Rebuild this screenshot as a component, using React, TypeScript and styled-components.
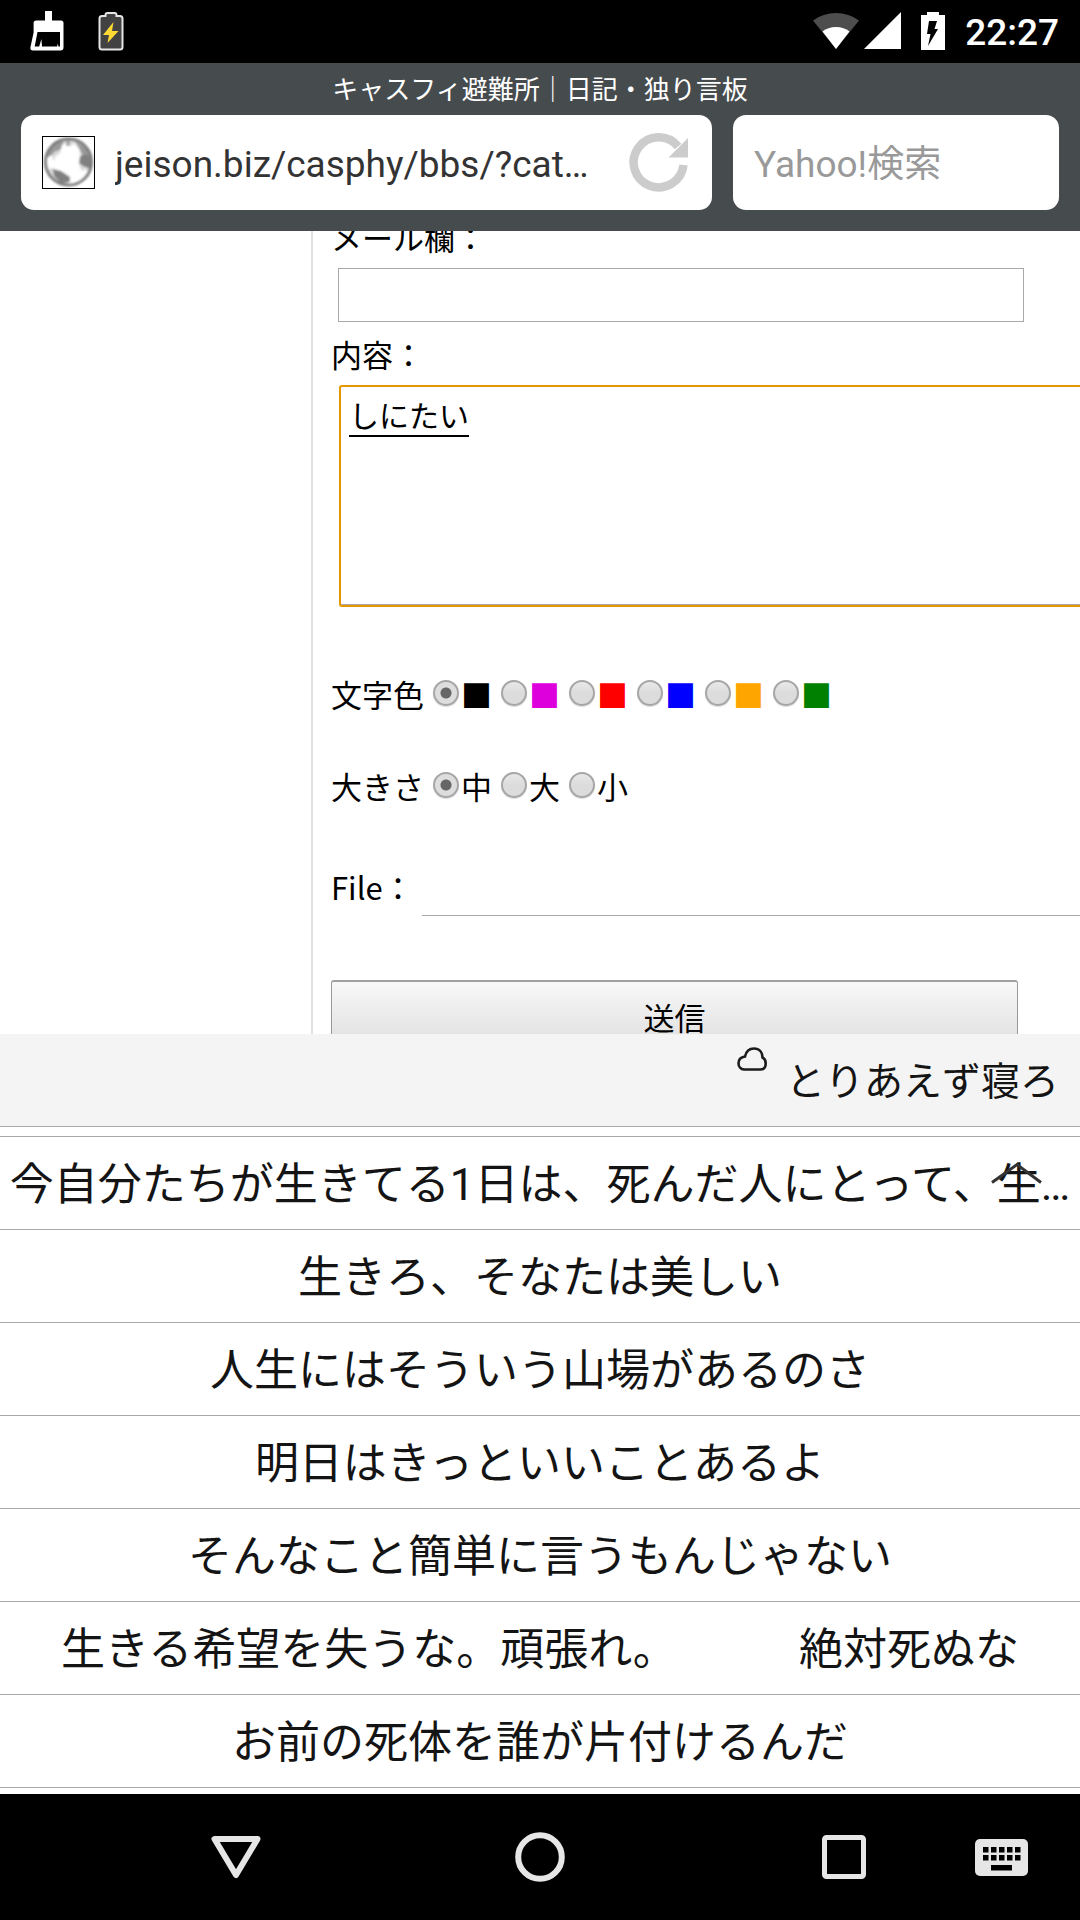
import React from 'react';
import styled, { createGlobalStyle } from 'styled-components';

const UI_FONT = "Roboto, 'Noto Sans CJK JP', sans-serif";
const PAGE_FONT = "'Noto Sans CJK JP', sans-serif";

const GlobalStyle = createGlobalStyle`
  *, *::before, *::after { box-sizing: border-box; }
  body { margin: 0; background: #000; }
  button, input, textarea { margin: 0; font: inherit; }
`;

const Screen = styled.div`
  display: flex;
  flex-direction: column;
  height: 100vh;
  overflow: hidden;
  background: #fff;
  font-family: ${UI_FONT};
`;

const StatusBar = styled.div`
  flex: none;
  display: flex;
  align-items: center;
  justify-content: space-between;
  height: 63px;
  padding: 0 21px 2px 30px;
  background: #000;
  color: #fff;
`;

const IconGroup = styled.div<{ $gap: number }>`
  display: flex;
  align-items: center;
  gap: ${(p) => p.$gap}px;
`;

const Glyph = styled.svg`
  display: block;
  flex: none;
`;

const Clock = styled.time`
  padding-top: 4px;
  font-size: 37px;
  font-weight: 500;
  line-height: 56px;
`;

const Header = styled.header`
  flex: none;
  padding: 0 21px 21px;
  background: #464b4e;
`;

const Title = styled.h1`
  margin: 0;
  padding-top: 2px;
  font-size: 26px;
  font-weight: 400;
  line-height: 50px;
  text-align: center;
  color: #fff;
`;

const Bars = styled.div`
  display: grid;
  grid-template-columns: 691fr 326fr;
  gap: 21px;
`;

const Bar = styled.div`
  display: flex;
  align-items: center;
  gap: 20px;
  min-width: 0;
  height: 95px;
  padding: 0 23px 0 21px;
  border-radius: 13px;
  background: #fff;
`;

const BarInput = styled.input`
  flex: 1;
  min-width: 0;
  width: 100%;
  height: 60px;
  padding: 3px 0 0;
  border: 0;
  outline: 0;
  background: none;
  color: #333;
  font-size: 37px;
  line-height: 57px;
  text-overflow: ellipsis;
  &::placeholder { color: #999; opacity: 1; }
`;

const PlainButton = styled.button`
  display: flex;
  align-items: center;
  justify-content: center;
  padding: 0;
  border: 0;
  background: none;
  color: inherit;
`;

const WebPage = styled.main`
  flex: 1;
  min-height: 0;
  display: grid;
  grid-template-columns: 311px minmax(0, 1fr);
  overflow: hidden;
  background: #fff;
  color: #000;
  font-family: ${PAGE_FONT};
  font-size: 31px;
  line-height: 46px;
`;

const Form = styled.form`
  grid-column: 2;
  margin-top: -17px;
  padding-left: 18px;
  border-left: 2px solid #e0e0e0;
`;

const Field = styled.div<{ $after: number }>`
  display: flex;
  flex-direction: column;
  gap: 8px;
  margin-bottom: ${(p) => p.$after}px;
`;

const MailInput = styled.input`
  width: calc(100% - 63px);
  height: 54px;
  margin-left: 7px;
  padding: 0 8px;
  border: 1px solid #a9a9a9;
  outline: 0;
`;

const Body = styled.textarea`
  display: block;
  width: 100%;
  height: 222px;
  margin-left: 8px;
  padding: 6px 8px;
  border: 2px solid #e59700;
  border-radius: 3px;
  outline: 0;
  box-shadow: inset 0 -1px 0 #a9a9a9;
  resize: none;
  font-size: 30px;
  line-height: 42px;
  text-decoration: underline;
  text-decoration-thickness: 2px;
  text-underline-offset: 8px;
`;

const Choices = styled.div`
  display: flex;
  align-items: center;
  gap: 9px;
  margin-bottom: 46px;
`;

const Choice = styled.label<{ $ink?: string }>`
  display: flex;
  align-items: center;
  gap: 2px;
  color: ${(p) => p.$ink ?? '#000'};
`;

const Radio = styled.input`
  appearance: none;
  width: 26px;
  height: 26px;
  margin: 0 0 3px;
  border: 2px solid #a6a6a6;
  border-radius: 50%;
  background: linear-gradient(#e8e8e8, #dcdcdc 50%);
  box-shadow: 0 1px 1px #ddd;
  &:checked {
    background: radial-gradient(circle, #666 0 5px, #ddd 6px);
  }
`;

const FileRow = styled.div`
  display: flex;
  align-items: flex-start;
  gap: 8px;
  margin: 55px 0 64px;
`;

const FileInput = styled.input`
  flex: 1;
  min-width: 0;
  height: 52px;
  border-bottom: 1px solid #a9a9a9;
  font-size: 0;
  &::file-selector-button { display: none; }
`;

const Submit = styled.button`
  width: calc(100% - 62px);
  height: 73px;
  padding: 0;
  border: 1px solid #999;
  border-top: 2px solid #a0a0a0;
  border-radius: 3px;
  background: linear-gradient(#f8f8f8, #dddddd);
  color: #000;
`;

const Candidates = styled.section`
  flex: none;
  background: #fff;
  color: #141414;
`;

const Predicted = styled.div`
  display: flex;
  justify-content: flex-end;
  align-items: flex-start;
  gap: 19px;
  height: 93px;
  padding: 0 21px;
  border-bottom: 1px solid #aaa;
  background: #f4f4f4;
`;

const PredictedWord = styled(PlainButton)`
  padding-top: 4px;
  font-size: 39px;
  line-height: 88px;
`;

const CloudBox = styled.span`
  padding-top: 12px;
`;

const Rows = styled.div`
  position: relative;
  margin: 9px 0 6px;
  border-top: 1px solid #aaa;
`;

const Row = styled.div`
  display: flex;
  border-bottom: 1px solid #aaa;
`;

const Word = styled(PlainButton)`
  flex: 1 0 auto;
  height: 92px;
  padding-top: 4px;
  font-size: 44px;
  line-height: 88px;
  white-space: nowrap;
`;

const Collapse = styled(PlainButton)`
  position: absolute;
  top: 24px;
  right: 36px;
`;

const NavBar = styled.nav`
  flex: none;
  display: grid;
  grid-template-columns: 157fr 158fr 146fr 158fr 146fr 158fr 157fr;
  height: 126px;
  background: #000;
`;

const NavButton = styled(PlainButton)<{ $col: number }>`
  grid-column: ${(p) => p.$col};
`;

const INKS = [
  { name: '黒', ink: '#000000' },
  { name: '紫', ink: '#dd00dd' },
  { name: '赤', ink: '#ff0000' },
  { name: '青', ink: '#0000ff' },
  { name: '橙', ink: '#ffa500' },
  { name: '緑', ink: '#008000' },
];

const SIZES = ['中', '大', '小'];

const CANDIDATES = [
  ['今自分たちが生きてる1日は、死んだ人にとって、生…'],
  ['生きろ、そなたは美しい'],
  ['人生にはそういう山場があるのさ'],
  ['明日はきっといいことあるよ'],
  ['そんなこと簡単に言うもんじゃない'],
  ['生きる希望を失うな。頑張れ。', '絶対死ぬな'],
  ['お前の死体を誰が片付けるんだ'],
];

const BrushIcon = () => (
  <Glyph width="34" height="40" viewBox="0 0 34 40">
    <path fill="#fff" d="M15 0h7v9.500h9q2.500 0 2.500 2.500V36.500q0 3-3 3H3Q0 39.500 .4 36.500L3.600 21.500V12q0-2.500 2.500-2.500H15z" />
    <path d="M7.500 21H30V35.500h-1.500l-.8-3-.5 3H12l-.6-7.500-2.200 7.500H4.700z" />
  </Glyph>
);

const ChargingIcon = () => (
  <Glyph width="26" height="40" viewBox="0 0 26 40">
    <path fill="#424242" stroke="#e6e6e6" strokeWidth="2" d="M4 5h3.500V4q0-2 2-2h7q2 0 2 2v1H22q2.500 0 2.500 2.500V36q0 2.500-2.500 2.500H4Q1.500 38.500 1.500 36V7.500Q1.500 5 4 5z" />
    <path fill="#fdd835" d="M15.500 11 5 24h6l-1.500 8L20.500 20H14z" />
  </Glyph>
);

const WifiIcon = () => (
  <Glyph width="46" height="38" viewBox="0 0 46 38">
    <path fill="#4d4d4d" d="M23 37 0 8.500Q10 1 23 1t23 7.500z" />
    <path fill="#fff" d="M23 37 9.500 19.500Q15 15 23 15t13.500 4.500z" />
  </Glyph>
);

const SignalIcon = () => (
  <Glyph width="37" height="38" viewBox="0 0 37 38">
    <path fill="#fff" d="M37 0v37H0z" />
  </Glyph>
);

const BatteryIcon = () => (
  <Glyph width="24" height="38" viewBox="0 0 24 38">
    <path fill="#fff" d="M6 0h12v3h6v35H0V3h6z" />
    <path d="M8 9h8l-2.500 8H17L7 34l2.500-12H6z" />
  </Glyph>
);

const GlobeIcon = () => (
  <Glyph width="53" height="53" viewBox="0 0 53 53">
    <defs>
      <filter id="soft" x="-20%" y="-20%" width="140%" height="140%">
        <feGaussianBlur stdDeviation="1.100" />
      </filter>
      <clipPath id="disc"><circle cx="26.500" cy="26" r="23" /></clipPath>
    </defs>
    <rect x=".5" y=".5" width="52" height="52" fill="#fff" stroke="#000" />
    <g filter="url(#soft)">
      <circle cx="26.500" cy="26" r="23" fill="#d9d9d9" />
      <g clipPath="url(#disc)">
        <path fill="#999" d="M4 16 14 5l8 1-2 7-8 3-5 8zM33 5l12 8 4 12-8-5-4-8z" />
        <path fill="#fff" d="M20 9l3-2 2 3h4l3-3 5 6 2 9-2 7 4 9-8 10-6 1-8-12-8-7 2-9 5-4z" />
        <path fill="#fff" d="M5 22l5-3 1 5 4 3-1 3 6 8-9-6-5 1zM37 38l6-5 3 3-9 11-7 1z" />
        <path fill="#808080" d="M11 33l8 2 9 6v5l-9 1-7-7zM38 20l7-2 5 6-1 9-8-3-4-3z" />
        <path fill="#aaa" d="M24 4h4v6h-4z" />
      </g>
      <circle cx="26.500" cy="26" r="23" fill="none" stroke="#7c7c7c" strokeWidth="3" />
    </g>
  </Glyph>
);

const ReloadIcon = () => (
  <Glyph width="60" height="60" viewBox="0 0 60 60">
    <path fill="none" stroke="#ccc" strokeWidth="8.500" d="M54.500 32A25 25 0 1 1 49 13.500" />
    <path fill="#ccc" d="M59 5V24.500H39.500z" />
  </Glyph>
);

const CloudIcon = () => (
  <Glyph width="30" height="26" viewBox="0 0 30 26">
    <path fill="none" stroke="#1c1c1c" strokeWidth="2.600" d="M7 23.500a6 6 0 0 1-5.500-6c0-4 2.800-6.500 6.500-7 1-4.500 4-8 9-8 5.500 0 8.500 4 8.500 9 2 1 3.200 3 3.200 6 0 4-2 6-5.200 6z" />
  </Glyph>
);

export default function App() {
  return (
    <Screen>
      <GlobalStyle />
      <StatusBar>
        <IconGroup $gap={34}>
          <BrushIcon />
          <ChargingIcon />
        </IconGroup>
        <IconGroup $gap={20}>
          <IconGroup $gap={5}>
            <WifiIcon />
            <SignalIcon />
          </IconGroup>
          <BatteryIcon />
          <Clock>22:27</Clock>
        </IconGroup>
      </StatusBar>

      <Header>
        <Title>キャスフィ避難所｜日記・独り言板</Title>
        <Bars>
          <Bar>
            <GlobeIcon />
            <BarInput aria-label="URL" readOnly value="jeison.biz/casphy/bbs/?cat…" />
            <PlainButton type="button" aria-label="再読み込み">
              <ReloadIcon />
            </PlainButton>
          </Bar>
          <Bar>
            <BarInput type="search" aria-label="検索" placeholder="Yahoo!検索" />
          </Bar>
        </Bars>
      </Header>

      <WebPage>
        <Form onSubmit={(e) => e.preventDefault()}>
          <Field $after={9}>
            <label htmlFor="mail">メール欄：</label>
            <MailInput id="mail" />
          </Field>
          <Field $after={64}>
            <label htmlFor="body">内容：</label>
            <Body id="body" defaultValue="しにたい" spellCheck={false} />
          </Field>
          <Choices role="radiogroup" aria-label="文字色">
            <span>文字色</span>
            {INKS.map((c, i) => (
              <Choice key={c.ink} $ink={c.ink}>
                <Radio type="radio" name="ink" aria-label={c.name} defaultChecked={i === 0} />
                ■
              </Choice>
            ))}
          </Choices>
          <Choices role="radiogroup" aria-label="大きさ">
            <span>大きさ</span>
            {SIZES.map((s, i) => (
              <Choice key={s}>
                <Radio type="radio" name="size" defaultChecked={i === 0} />
                {s}
              </Choice>
            ))}
          </Choices>
          <FileRow>
            <label htmlFor="file">File：</label>
            <FileInput id="file" type="file" />
          </FileRow>
          <Submit type="submit">送信</Submit>
        </Form>
      </WebPage>

      <Candidates>
        <Predicted>
          <CloudBox>
            <CloudIcon />
          </CloudBox>
          <PredictedWord type="button">とりあえず寝ろ</PredictedWord>
        </Predicted>
        <Rows>
          {CANDIDATES.map((words) => (
            <Row key={words[0]}>
              {words.map((w) => (
                <Word type="button" key={w}>{w}</Word>
              ))}
            </Row>
          ))}
          <Collapse type="button" aria-label="閉じる">
            <Glyph width="54" height="24" viewBox="0 0 54 24">
              <path fill="none" stroke="#333" strokeWidth="3" d="M2 21.500 27 3.500l24 18" />
            </Glyph>
          </Collapse>
        </Rows>
      </Candidates>

      <NavBar>
        <NavButton type="button" $col={2} aria-label="戻る">
          <Glyph width="50" height="44" viewBox="0 0 50 44">
            <path fill="none" stroke="#e6e6e6" strokeWidth="6" strokeLinejoin="round" d="M3.500 4h43L25 40z" />
          </Glyph>
        </NavButton>
        <NavButton type="button" $col={4} aria-label="ホーム">
          <Glyph width="50" height="50" viewBox="0 0 50 50">
            <circle cx="25" cy="25" r="21.800" fill="none" stroke="#e6e6e6" strokeWidth="6" />
          </Glyph>
        </NavButton>
        <NavButton type="button" $col={6} aria-label="履歴">
          <Glyph width="44" height="44" viewBox="0 0 44 44">
            <rect x="2.500" y="2.500" width="39" height="39" rx="2" fill="none" stroke="#e6e6e6" strokeWidth="5" />
          </Glyph>
        </NavButton>
        <NavButton type="button" $col={7} aria-label="キーボード">
          <Glyph width="53" height="37" viewBox="0 0 53 37">
            <rect width="53" height="37" rx="5" fill="#e6e6e6" />
            {[8, 16, 24, 32, 40].map((x) => (
              <path key={x} d={`M${x} 8h5.500v5.500h-5.500zM${x} 16h5.500v5.500h-5.500z`} />
            ))}
            <path d="M16 26h21v5.500H16z" />
          </Glyph>
        </NavButton>
      </NavBar>
    </Screen>
  );
}
